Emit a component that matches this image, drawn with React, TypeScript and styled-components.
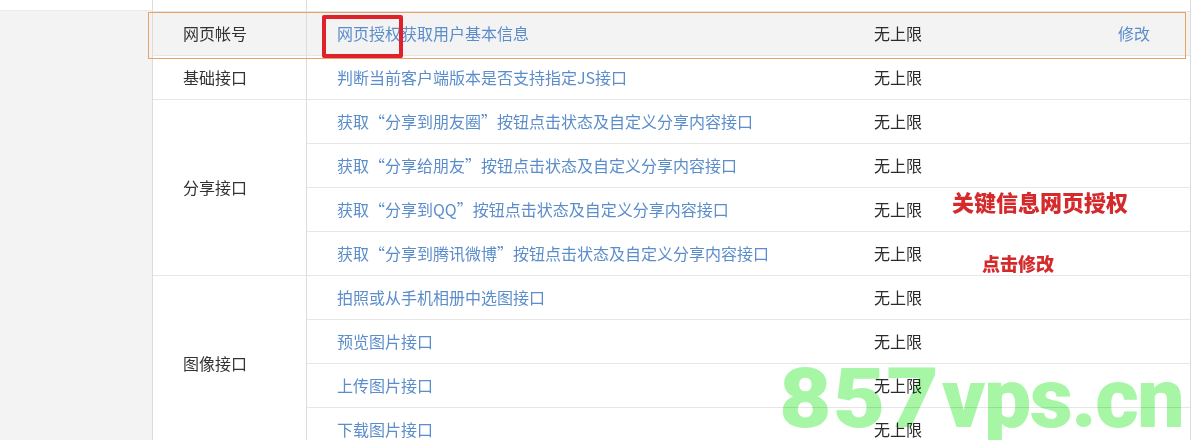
import React from "react";
import styled, { createGlobalStyle } from "styled-components";

const Global = createGlobalStyle`
  html, body { margin: 0; padding: 0; background: #ffffff; }
  body { font-family: "Noto Sans CJK SC", "Noto Sans", sans-serif; overflow: hidden; }
`;

const Page = styled.div`
  position: relative;
  width: 1194px;
  height: 440px;
  overflow: hidden;
  display: flex;
  align-items: flex-start;
`;

const Sidebar = styled.aside`
  width: 152px;
  height: 430px;
  margin-top: 10px;
  background: #f3f3f3;
  border-top: 1px solid #ebebeb;
  flex-shrink: 0;
`;

const Table = styled.div`
  display: grid;
  grid-template-columns: 154px 537px 244px 102px;
  grid-auto-rows: 44px;
  grid-template-rows: 12px;
  border-left: 1px solid #dcdcdc;
  border-right: 1px solid #dcdcdc;
  width: 1037px;
`;

const Cell = styled.div<{ $hl?: boolean; $span?: number }>`
  box-sizing: border-box;
  display: flex;
  align-items: center;
  padding-left: 30px;
  padding-bottom: 1px;
  font-size: 16px;
  line-height: 20px;
  white-space: nowrap;
  background: ${(p) => (p.$hl ? "#f3f3f3" : "#ffffff")};
  border-bottom: 1px solid #e6e6e6;
  ${(p) => (p.$span ? `grid-row: span ${p.$span};` : "")}
`;

const CatCell = styled(Cell)`
  color: #333333;
  border-right: 1px solid #dcdcdc;
`;

const DescCell = styled(Cell)`
  color: #5b8dcb;
`;

const LimitCell = styled(Cell)`
  color: #2a2a2a;
`;

const ActionCell = styled(Cell)`
  color: #5b8dcb;
`;

const HighlightBox = styled.div`
  position: absolute;
  left: 148px;
  top: 12px;
  width: 1036px;
  height: 45px;
  border: 1px solid #e3a466;
  pointer-events: none;
`;

const RedMark = styled.div`
  position: absolute;
  left: 322px;
  top: 15px;
  width: 73px;
  height: 35px;
  border: 4px solid #e0212b;
  border-radius: 2px;
  pointer-events: none;
`;

const Note = styled.div<{ $size: number; $left: number; $top: number }>`
  position: absolute;
  left: ${(p) => p.$left}px;
  top: ${(p) => p.$top}px;
  font-family: "Noto Sans CJK SC", sans-serif;
  font-weight: 900;
  font-size: ${(p) => p.$size}px;
  line-height: ${(p) => p.$size}px;
  color: #d42a2c;
  white-space: nowrap;
`;

const Watermark = styled.div`
  position: absolute;
  left: 779px;
  top: 357px;
  display: flex;
  align-items: baseline;
  gap: 8px;
  font-family: Roboto, "Noto Sans", sans-serif;
  font-weight: 900;
  font-size: 84px;
  line-height: 84px;
  color: #a6f6a6;
  mix-blend-mode: multiply;
  white-space: nowrap;
  pointer-events: none;
`;

const Digits = styled.span`
  display: inline-block;
  width: 155px;
  letter-spacing: 1px;
  transform: scaleX(1.08);
  transform-origin: left center;
`;

const Domain = styled.span`
  letter-spacing: -1.5px;
`;

type Item = { name: string; hl?: boolean; action?: string };
type Group = { cat: string; items: Item[] };

const groups: Group[] = [
  { cat: "网页帐号", items: [{ name: "网页授权获取用户基本信息", hl: true, action: "修改" }] },
  { cat: "基础接口", items: [{ name: "判断当前客户端版本是否支持指定JS接口" }] },
  {
    cat: "分享接口",
    items: [
      { name: "获取“分享到朋友圈”按钮点击状态及自定义分享内容接口" },
      { name: "获取“分享给朋友”按钮点击状态及自定义分享内容接口" },
      { name: "获取“分享到QQ”按钮点击状态及自定义分享内容接口" },
      { name: "获取“分享到腾讯微博”按钮点击状态及自定义分享内容接口" },
    ],
  },
  {
    cat: "图像接口",
    items: [
      { name: "拍照或从手机相册中选图接口" },
      { name: "预览图片接口" },
      { name: "上传图片接口" },
      { name: "下载图片接口" },
    ],
  },
];

export default function App() {
  return (
    <>
      <Global />
      <Page>
        <Sidebar />
        <Table>
          <CatCell />
          <DescCell />
          <LimitCell />
          <ActionCell />
          {groups.map((g) =>
            g.items.map((it, i) => (
              <React.Fragment key={g.cat + i}>
                {i === 0 && (
                  <CatCell $span={g.items.length} $hl={it.hl}>
                    {g.cat}
                  </CatCell>
                )}
                <DescCell $hl={it.hl}>{it.name}</DescCell>
                <LimitCell $hl={it.hl}>无上限</LimitCell>
                <ActionCell $hl={it.hl}>{it.action ?? ""}</ActionCell>
              </React.Fragment>
            ))
          )}
        </Table>
        <Watermark>
          <Digits>857</Digits>
          <Domain>vps.cn</Domain>
        </Watermark>
        <HighlightBox />
        <RedMark />
        <Note $size={22} $left={952} $top={190}>关键信息网页授权</Note>
        <Note $size={18} $left={982} $top={254}>点击修改</Note>
      </Page>
    </>
  );
}
